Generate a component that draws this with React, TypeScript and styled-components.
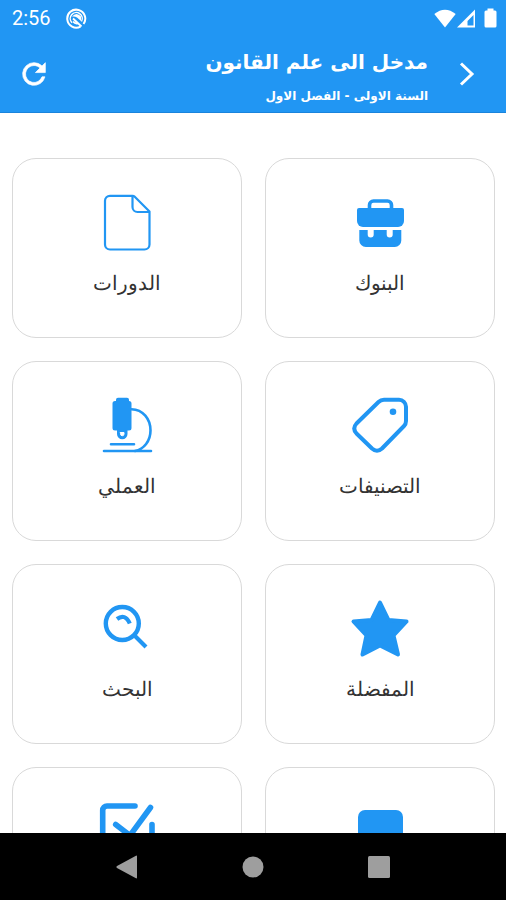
import React from "react";
import styled, { createGlobalStyle } from "styled-components";

const BLUE = "#2196f3";

const GlobalStyle = createGlobalStyle`
  *, *::before, *::after { box-sizing: border-box; }
  body {
    margin: 0;
    background: #fff;
    font-family: "DejaVu Sans", sans-serif;
  }
`;

const Screen = styled.div`
  height: 100vh;
  display: flex;
  flex-direction: column;
  overflow: hidden;
`;

const TopArea = styled.header`
  flex: none;
  background: ${BLUE};
  color: #fff;
  border-bottom: 1px solid #1a84dc;
`;

const StatusBar = styled.div`
  display: flex;
  align-items: center;
  justify-content: space-between;
  height: 36px;
  padding: 0 9px 0 12px;
`;

const StatusGroup = styled.div<{ $gap: number }>`
  display: flex;
  align-items: center;
  gap: ${(p) => p.$gap}px;
`;

const Clock = styled.span`
  font: 400 20px/24px Roboto, sans-serif;
`;

const AppBar = styled.div`
  display: flex;
  align-items: center;
  height: 76px;
  padding: 0 19px 0 14px;
`;

const BarButton = styled.button`
  flex: none;
  display: flex;
  align-items: center;
  justify-content: center;
  width: 40px;
  height: 40px;
  padding: 0;
  border: 0;
  background: none;
  color: inherit;
  cursor: pointer;
`;

const Titles = styled.div`
  flex: 1;
  min-width: 0;
  padding: 8px 19px 0 0;
`;

const Title = styled.h1`
  margin: 0;
  font-size: 20px;
  line-height: 36px;
  font-weight: 700;
`;

const Subtitle = styled.p`
  margin: 0;
  font-size: 12px;
  line-height: 32px;
  font-weight: 700;
`;

const Content = styled.main`
  flex: 1;
  min-height: 0;
  overflow: hidden;
`;

const Grid = styled.div`
  display: grid;
  grid-template-columns: repeat(2, minmax(0, 1fr));
  gap: 23px;
  padding: 45px 11px 45px 12px;
`;

const Card = styled.button`
  display: flex;
  flex-direction: column;
  align-items: center;
  height: 180px;
  padding: 34px 8px 0;
  border: 1px solid #d9d9d9;
  border-radius: 24px;
  background: #fff;
  color: #333;
  font-family: inherit;
  cursor: pointer;
`;

const CardIcon = styled.svg`
  flex: none;
  width: 60px;
  height: 60px;
  fill: none;
  stroke: ${BLUE};
  stroke-linecap: round;
  stroke-linejoin: round;
`;

const Label = styled.span`
  margin-top: 12px;
  font-size: 20px;
  line-height: 36px;
  font-weight: 200;
`;

const NavBar = styled.nav`
  flex: none;
  display: flex;
  align-items: center;
  justify-content: center;
  gap: 86px;
  height: 67px;
  background: #000;
  color: #9e9e9e;
`;

const icons = {
  briefcase: (
    <>
      <path d="M19.5 16v-4a4 4 0 0 1 4-4h14a4 4 0 0 1 4 4v4" strokeWidth="3.6" />
      <path
        d="M9 15h43a2 2 0 0 1 2 2v11a6 6 0 0 1-6 6H13a6 6 0 0 1-6-6V17a2 2 0 0 1 2-2z"
        fill={BLUE}
        stroke="none"
      />
      <path
        d="M9.3 37h8.4v4.5a3 3 0 0 0 6 0V37h13v4.5a3 3 0 0 0 6 0V37h8.6v10.5a6.5 6.5 0 0 1-6.5 6.5h-29a6.5 6.5 0 0 1-6.5-6.5z"
        fill={BLUE}
        stroke="none"
      />
    </>
  ),
  file: (
    <path
      d="M35.5 2.8H13a5 5 0 0 0-5 5V51.5a5 5 0 0 0 5 5h34.5a5 5 0 0 0 5-5V18.5L37.5 3.5Q36.8 2.8 35.5 2.8V14a5 5 0 0 0 5 5h11.5"
      strokeWidth="2.2"
    />
  ),
  tag: (
    <>
      <path
        d="M34 3.8H49a7 7 0 0 1 7 7V25q0 3-2 5L32 52.5q-5 4.5-10 0L6.500 37.5q-4.5-5 0-10L28.500 6q2.3-2.2 5.5-2.2z"
        strokeWidth="4"
      />
      <circle cx="43" cy="15.7" r="3.3" fill={BLUE} stroke="none" />
    </>
  ),
  microscope: (
    <>
      <path
        d="M21 1.7h9a2 2 0 0 1 2 2V5a2.5 2.5 0 0 1 2.5 2.5V32a2.5 2.5 0 0 1-2.5 2.5h-1.5V38a5 5 0 0 1-10.5 0v-3.5H18a2.5 2.5 0 0 1-2.5-2.5V7.5A2.5 2.5 0 0 1 18 5h1V3.7a2 2 0 0 1 2-2z"
        fill={BLUE}
        stroke="none"
      />
      <path d="M23.5 36.5h3.500V38a1.700 1.700 0 0 1-3.500 0z" fill="#fff" stroke="#fff" strokeWidth="1" />
      <path d="M34.5 13.2C46 13.5 53.5 23 53.5 34.5C53.5 45 47 53 38 55" strokeWidth="2.6" />
      <path d="M7 55H54M14 48.300H37" strokeWidth="2.6" />
    </>
  ),
  star: (
    <path
      d="M30 3.5L38.5 21L56.5 22.5L43.5 36.5L48 55.5L30 46.5L12.5 55.5L16.5 36.5L3.5 22.5L21.5 21z"
      fill={BLUE}
      strokeWidth="4"
    />
  ),
  search: (
    <>
      <circle cx="25.3" cy="24.5" r="16.5" strokeWidth="4.4" />
      <path d="M37.5 36.5L49 48M20 20q8-6 12.8 4.5" strokeWidth="4.2" strokeLinecap="butt" />
    </>
  ),
  square: <rect x="8" y="8" width="45" height="45" rx="7" fill={BLUE} stroke="none" />,
  check: (
    <path
      d="M38 4H10a4.3 4.3 0 0 0-4.3 4.3V48a5 5 0 0 0 5 5H50a5 5 0 0 0 5-5V22.5M18.7 22.5L33 33.5L53.5 5.5"
      strokeWidth="5.6"
    />
  ),
};

const cards: { icon: keyof typeof icons; label?: string }[] = [
  { icon: "briefcase", label: "البنوك" },
  { icon: "file", label: "الدورات" },
  { icon: "tag", label: "التصنيفات" },
  { icon: "microscope", label: "العملي" },
  { icon: "star", label: "المفضلة" },
  { icon: "search", label: "البحث" },
  { icon: "square" },
  { icon: "check" },
];

export default function App() {
  return (
    <Screen>
      <GlobalStyle />
      <TopArea>
        <StatusBar>
          <StatusGroup $gap={15}>
            <Clock>2:56</Clock>
            <svg width="21" height="21" viewBox="0 0 21 21" fill="none" stroke="#fff">
              <path d="M14.5 18.6A9 9 0 1 1 17.5 16" strokeWidth="2" />
              <path d="M6 14.8A6 6 0 1 1 15.5 13.5" strokeWidth="1.5" />
              <path d="M6 8.5Q10.5 3.5 15 8.5L15 13L11 9.5Q9 8 6 8.5z" fill="#fff" stroke="none" />
              <path d="M7 10.5l8.5 8M7 13.5q2 2.5 4.5 2" strokeWidth="1.8" />
            </svg>
          </StatusGroup>
          <StatusGroup $gap={1}>
            <svg width="22" height="19" viewBox="0 0 22 19">
              <path d="M.3 5Q11-3.5 21.7 5L11 18.5z" fill="#fff" />
            </svg>
            <svg width="19" height="19" viewBox="0 0 19 19">
              <path
                d="M18 .5V18.5H0zM16.500 6L10.500 12V16.500H16.500z"
                fill="#fff"
                fillRule="evenodd"
              />
            </svg>
            <svg width="20" height="20" viewBox="0 0 20 20">
              <path
                d="M10.5 .5h6v2h1.5a1.5 1.5 0 0 1 1.5 1.5v14a1.5 1.5 0 0 1-1.5 1.5h-9a1.5 1.5 0 0 1-1.5-1.5V4a1.5 1.5 0 0 1 1.5-1.5h1.5z"
                fill="#fff"
              />
            </svg>
          </StatusGroup>
        </StatusBar>
        <AppBar dir="rtl">
          <BarButton type="button" aria-label="رجوع">
            <svg width="16" height="24" viewBox="0 0 16 24" fill="none" stroke="#fff" strokeWidth="3">
              <path d="M2 1.5L13 12L2 22.5" />
            </svg>
          </BarButton>
          <Titles>
            <Title>مدخل الى علم القانون</Title>
            <Subtitle>السنة الاولى - الفصل الاول</Subtitle>
          </Titles>
          <BarButton type="button" aria-label="تحديث">
            <svg width="34" height="34" viewBox="0 0 24 24" fill="#fff" stroke="#fff" strokeWidth=".5">
              <path d="M17.65 6.35A7.96 7.96 0 0 0 12 4a8 8 0 1 0 7.73 10h-2.08A6 6 0 1 1 12 6c1.66 0 3.14.69 4.22 1.78L13 11h7V4z" />
            </svg>
          </BarButton>
        </AppBar>
      </TopArea>
      <Content dir="rtl">
        <Grid>
          {cards.map(({ icon, label }) => (
            <Card key={icon} type="button">
              <CardIcon viewBox="0 0 60 60" aria-hidden="true">
                {icons[icon]}
              </CardIcon>
              {label && <Label>{label}</Label>}
            </Card>
          ))}
        </Grid>
      </Content>
      <NavBar>
        <BarButton type="button" aria-label="Back">
          <svg width="24" height="24" viewBox="0 0 24 24" fill="currentColor">
            <path d="M22 1.5V22.5Q22 24 20.5 23L2 13Q.5 12 2 11L20.5 1Q22 0 22 1.5z" />
          </svg>
        </BarButton>
        <BarButton type="button" aria-label="Home">
          <svg width="22" height="22" viewBox="0 0 22 22" fill="currentColor">
            <circle cx="11" cy="11" r="10.5" />
          </svg>
        </BarButton>
        <BarButton type="button" aria-label="Recents">
          <svg width="22" height="22" viewBox="0 0 22 22" fill="currentColor">
            <rect width="22" height="22" rx="1.5" />
          </svg>
        </BarButton>
      </NavBar>
    </Screen>
  );
}
